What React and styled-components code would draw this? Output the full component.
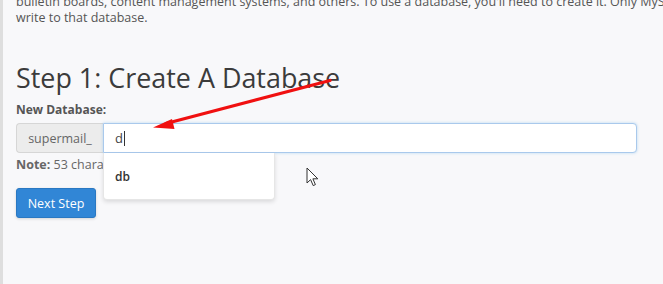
import React from "react";
import styled, { createGlobalStyle } from "styled-components";

const GlobalStyle = createGlobalStyle`
  html, body { margin: 0; padding: 0; }
  body {
    background: #f8f8fa;
    font-family: "Open Sans", "Liberation Sans", sans-serif;
  }
`;

const Page = styled.div`
  position: relative;
  height: 284px;
  overflow: hidden;
  border-left: 3px solid #dedede;
  padding-left: 13px;
  box-sizing: border-box;
`;

const Intro = styled.p`
  margin: -6px 0 0;
  font-size: 12.5px;
  line-height: 16px;
  color: #555;
  white-space: nowrap;
`;

const Heading = styled.h1`
  margin: 36px 0 0;
  font-size: 26.9px;
  line-height: 32px;
  font-weight: 400;
  color: #3b3b3b;
`;

const Label = styled.label`
  display: block;
  margin-top: 8px;
  font-size: 12px;
  line-height: 16px;
  font-weight: 700;
  color: #555;
`;

const Group = styled.div`
  position: relative;
  display: flex;
  margin-top: 5px;
  width: 621px;
  height: 30px;
`;

const Addon = styled.div`
  display: flex;
  align-items: center;
  justify-content: center;
  width: 87px;
  box-sizing: border-box;
  background: #ececec;
  border: 1px solid #d6d6d6;
  border-right: none;
  border-radius: 4px 0 0 4px;
  font-size: 12.5px;
  color: #666;
`;

const Field = styled.div`
  flex: 1;
  display: flex;
  align-items: center;
  box-sizing: border-box;
  padding-left: 11px;
  background: #fff;
  border: 1px solid #a9c9ec;
  border-radius: 0 4px 4px 0;
  box-shadow: 0 0 3px rgba(102, 175, 233, 0.45);
  font-size: 13px;
  color: #444;
`;

const Caret = styled.span`
  display: inline-block;
  width: 1px;
  height: 15px;
  margin-left: 1px;
  background: #333;
`;

const Suggest = styled.div`
  position: absolute;
  left: 87px;
  top: 30px;
  width: 172px;
  height: 47px;
  box-sizing: border-box;
  display: flex;
  align-items: center;
  padding-left: 11px;
  background: #fff;
  border: 1px solid #e6e6e6;
  border-top: none;
  border-radius: 0 0 4px 4px;
  box-shadow: 0 2px 4px rgba(0, 0, 0, 0.12);
  font-size: 12px;
  font-weight: 600;
  color: #333;
  z-index: 2;
`;

const Note = styled.div`
  margin-top: 4px;
  font-size: 12.5px;
  line-height: 16px;
  color: #666;
  b { font-weight: 700; }
`;

const Button = styled.button`
  display: block;
  margin-top: 15px;
  width: 80px;
  height: 30px;
  padding: 0;
  background: #3186d6;
  border: 1px solid #2a78c2;
  border-radius: 3px;
  box-shadow: 0 1px 3px rgba(0, 0, 0, 0.15);
  font-family: inherit;
  font-size: 12.5px;
  color: #fff;
`;

const Overlay = styled.svg`
  position: absolute;
  left: -3px;
  top: 0;
  pointer-events: none;
  z-index: 5;
`;

export default function App() {
  return (
    <>
      <GlobalStyle />
      <Page>
        <Intro>
          bulletin boards, content management systems, and others. To use a database, you'll need to create it. Only MySQL users with privileges can
          <br />
          write to that database.
        </Intro>
        <Heading>Step 1: Create A Database</Heading>
        <Label>New Database:</Label>
        <Group>
          <Addon>supermail_</Addon>
          <Field>
            d<Caret />
          </Field>
          <Suggest>db</Suggest>
        </Group>
        <Note>
          <b>Note:</b> 53 characters max.
        </Note>
        <Button>Next Step</Button>
        <Overlay width="663" height="284" viewBox="0 0 663 284">
          <line x1="330" y1="80.5" x2="166" y2="123.5" stroke="#f01010" strokeWidth="3.2" strokeLinecap="round" />
          <polygon points="153,127.5 172,119 174.5,129" fill="#f01010" />
          <path
            d="M307 168 L307 183 L310.6 179.6 L313.2 185.6 L315.4 184.6 L312.9 178.8 L317.8 178.8 Z"
            fill="#fff"
            stroke="#333"
            strokeWidth="1"
            strokeLinejoin="round"
          />
        </Overlay>
      </Page>
    </>
  );
}
